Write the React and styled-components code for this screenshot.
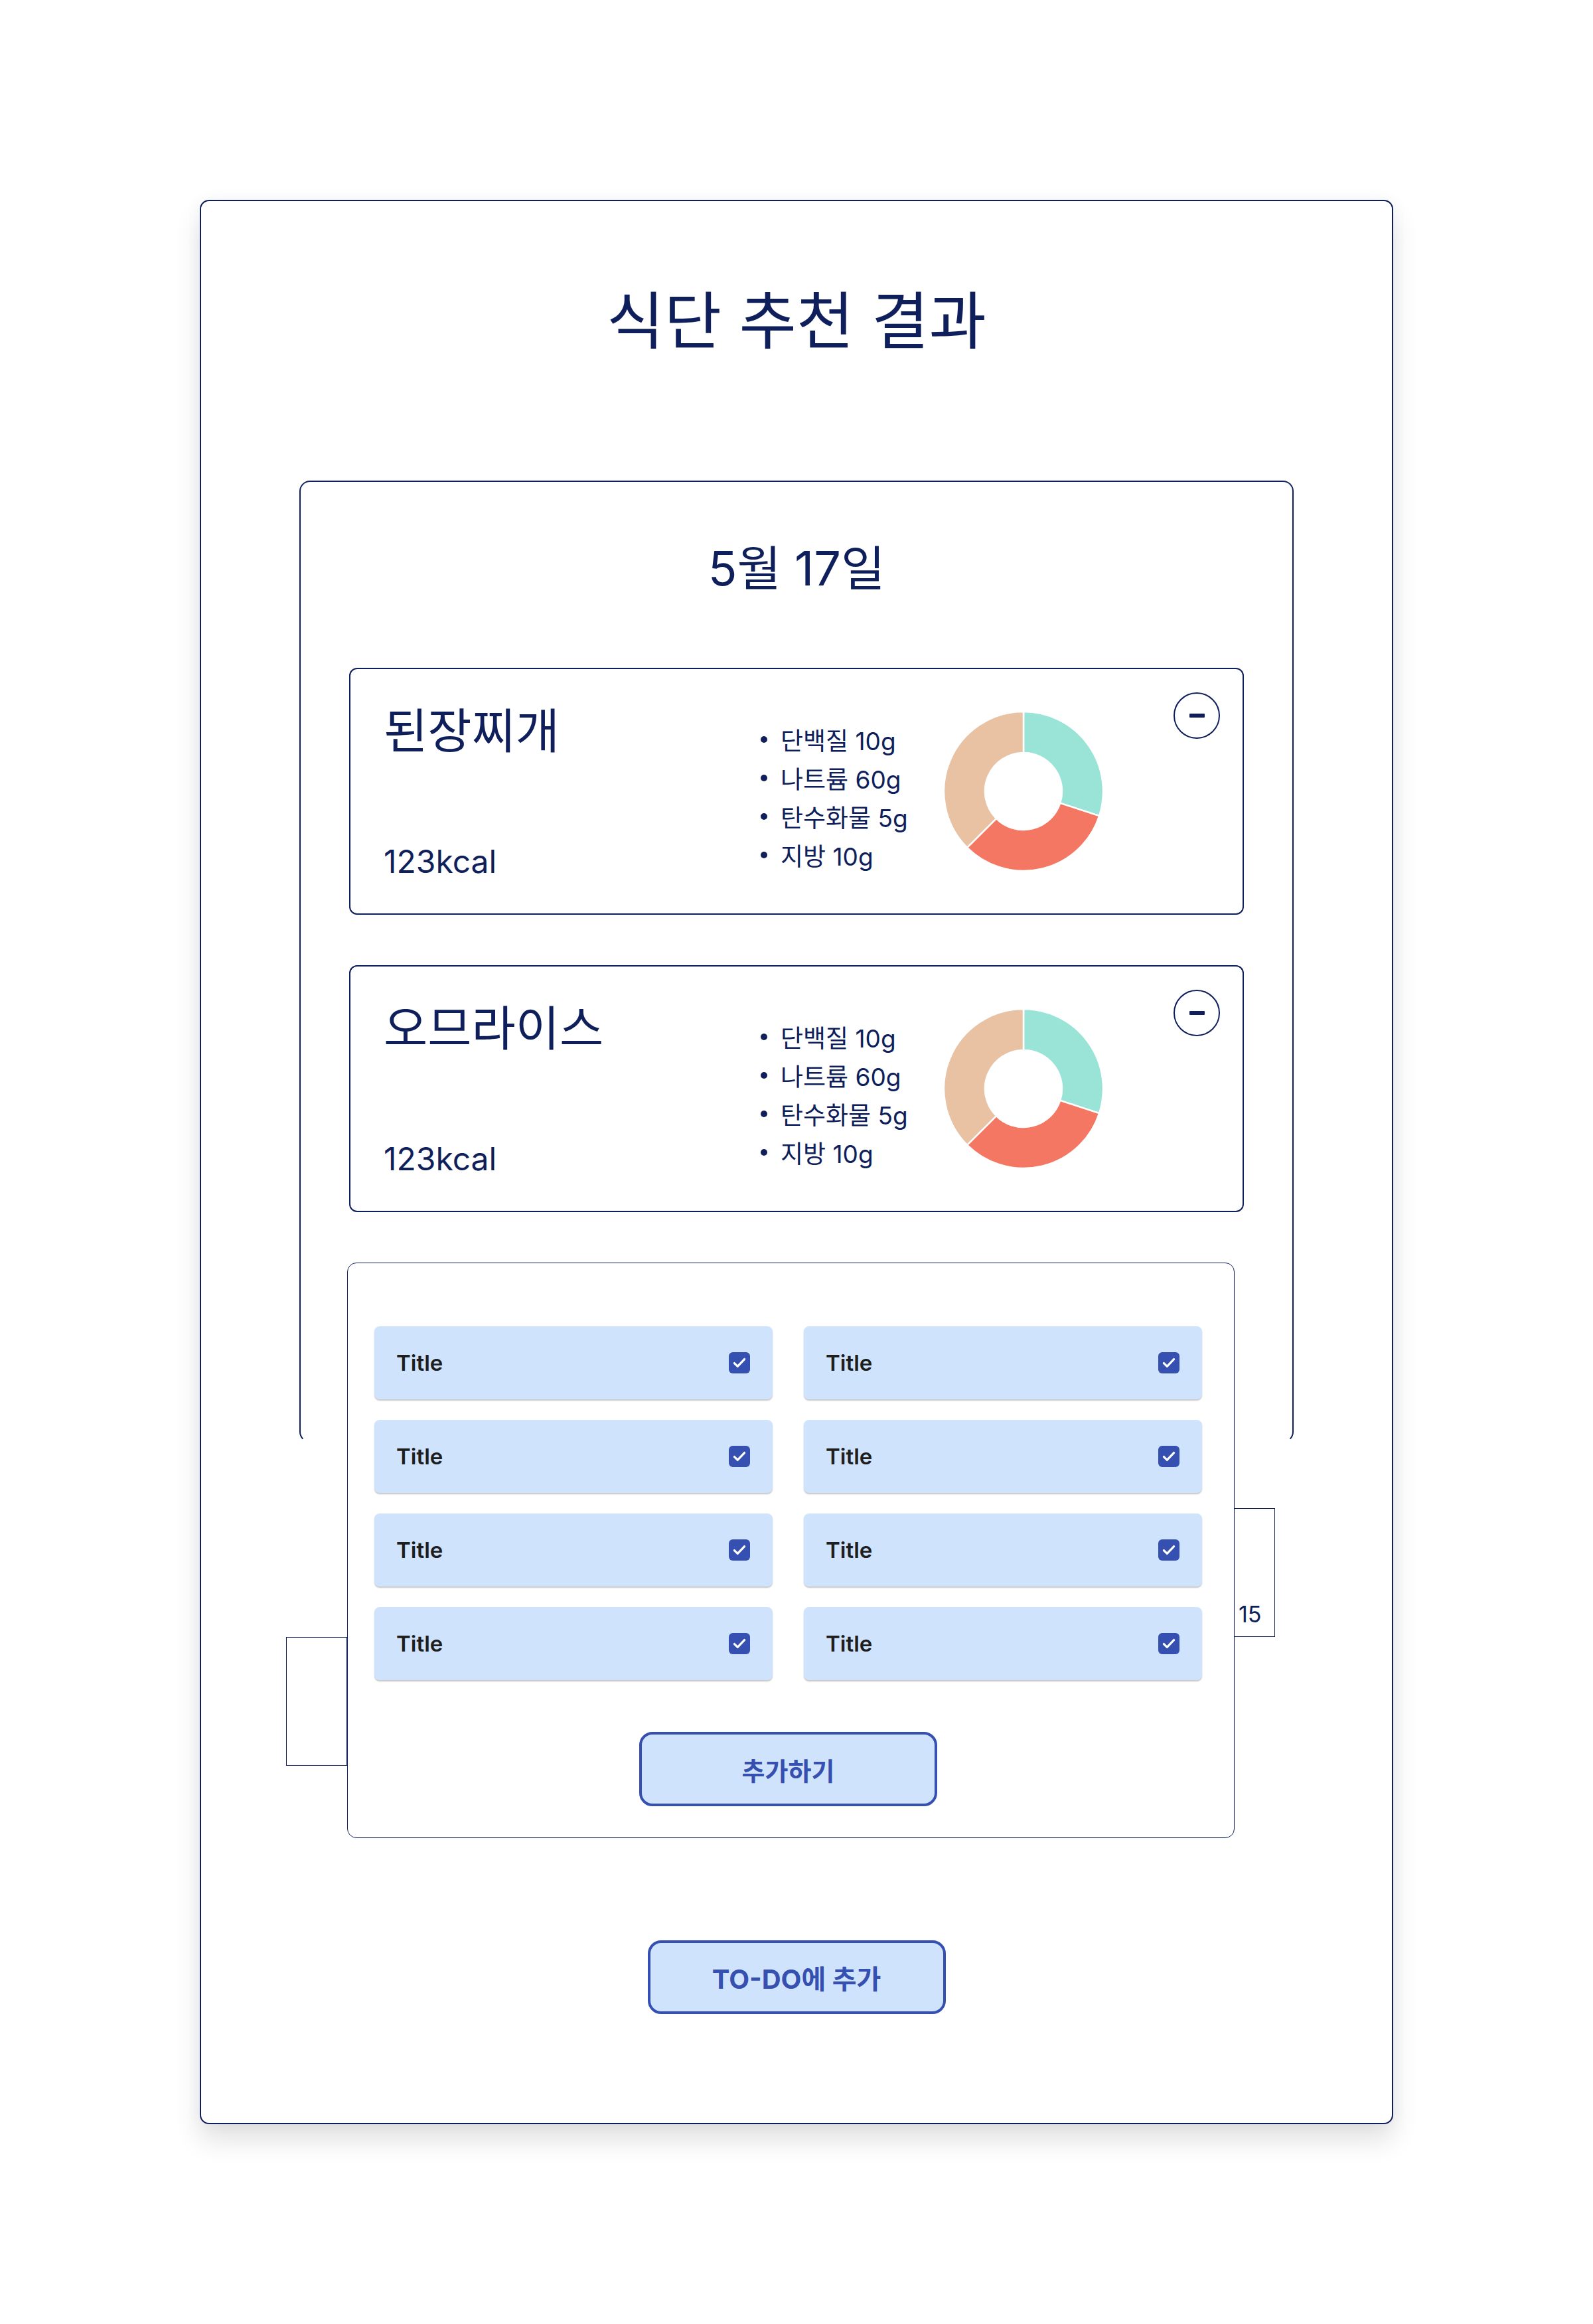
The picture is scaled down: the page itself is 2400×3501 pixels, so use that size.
import styled, { createGlobalStyle } from 'styled-components';

const NAVY = '#0f1f5c';
const BLUE = '#3550b0';
const LIGHT = '#d0e3fd';

const GlobalStyle = createGlobalStyle`
  * { box-sizing: border-box; }
  html, body {
    margin: 0;
    padding: 0;
    background: #ffffff;
    font-family: "Inter", "Noto Sans CJK KR", sans-serif;
    color: ${NAVY};
  }
`;

const Page = styled.div`
  width: 2400px;
  min-height: 3501px;
  padding-top: 301px;
`;

const OuterCard = styled.div`
  width: 1798px;
  margin: 0 auto;
  padding: 125px 0 164px;
  border: 2px solid ${NAVY};
  border-radius: 14px;
  background: #fff;
  box-shadow: 0 24px 40px rgba(0, 0, 0, 0.12), 0 0 24px rgba(0, 0, 0, 0.04);
  display: flex;
  flex-direction: column;
`;

const Title = styled.h1`
  margin: 0;
  font-size: 94px;
  line-height: 113px;
  font-weight: 400;
  text-align: center;
  color: ${NAVY};
`;

const DayCard = styled.section`
  width: 1498px;
  height: 1449px;
  margin: 183px auto 0;
  padding-top: 87px;
  border: 2px solid ${NAVY};
  border-bottom-color: transparent;
  border-radius: 16px;
  display: flex;
  flex-direction: column;
  flex-shrink: 0;
`;

const DateLabel = styled.h2`
  margin: 0 0 107px;
  font-size: 72px;
  line-height: 86px;
  font-weight: 400;
  text-align: center;
  color: ${NAVY};
`;

const MealCard = styled.div`
  width: 1348px;
  height: 372px;
  margin: 0 auto 76px;
  border: 2px solid ${NAVY};
  border-radius: 12px;
  display: flex;
  align-items: stretch;
  flex-shrink: 0;
`;

const MealInfo = styled.div`
  flex: 0 0 618px;
  padding: 50px 0 49px 50px;
  display: flex;
  flex-direction: column;
  justify-content: space-between;
`;

const MealName = styled.div`
  font-size: 72px;
  line-height: 86px;
  color: ${NAVY};
`;

const Kcal = styled.div`
  font-size: 48px;
  line-height: 58px;
  color: ${NAVY};
`;

const Nutrients = styled.ul`
  flex: 0 0 276px;
  align-self: center;
  margin: 18px 0 0;
  padding: 0;
  list-style: none;
`;

const Nutrient = styled.li`
  display: flex;
  align-items: center;
  gap: 20px;
  height: 58px;
  font-size: 37px;
  white-space: nowrap;
  color: ${NAVY};

  &::before {
    content: '';
    width: 10px;
    height: 10px;
    border-radius: 50%;
    background: ${NAVY};
    flex: 0 0 10px;
  }
`;

const DonutWrap = styled.div`
  flex: 0 0 240px;
  align-self: center;
  display: flex;
`;

const MinusButton = styled.button`
  align-self: flex-start;
  margin: 35px 34px 0 auto;
  width: 70px;
  height: 70px;
  padding: 0;
  border: 2px solid ${NAVY};
  border-radius: 50%;
  background: #fff;
  display: flex;
  align-items: center;
  justify-content: center;

  &::after {
    content: '';
    width: 23px;
    height: 6px;
    border-radius: 1px;
    background: ${NAVY};
  }
`;

const TodoCard = styled.div`
  position: relative;
  z-index: 2;
  width: 1337px;
  margin-left: 70px;
  padding: 95px 48px 47px 40px;
  border: 1px solid ${NAVY};
  border-radius: 14px;
  background: #fff;
  display: flex;
  flex-direction: column;
  align-items: center;
  flex-shrink: 0;
`;

const TodoGrid = styled.div`
  display: grid;
  grid-template-columns: 600px 600px;
  grid-auto-rows: 110px;
  column-gap: 47px;
  row-gap: 31px;
  align-self: stretch;
`;

const TodoItem = styled.div`
  display: flex;
  align-items: center;
  justify-content: space-between;
  padding: 0 34px 0 33px;
  background: ${LIGHT};
  border-radius: 8px;
  box-shadow: 0 2px 2px rgba(0, 0, 0, 0.22);
  font-size: 33px;
  font-weight: 600;
  color: #1e1e1e;
`;

const Check = styled.span`
  width: 32px;
  height: 32px;
  border-radius: 6px;
  background: ${BLUE};
  display: flex;
  align-items: center;
  justify-content: center;
`;

const OutlineButton = styled.button`
  width: 449px;
  height: ${(p) => p.$h || 112}px;
  margin-top: ${(p) => p.$top || 0}px;
  border: 4px solid ${BLUE};
  border-radius: 20px;
  background: ${LIGHT};
  color: ${BLUE};
  font-family: "Inter", "Noto Sans CJK KR", sans-serif;
  font-size: ${(p) => p.$size || 38}px;
  font-weight: 700;
  cursor: pointer;
  align-self: center;
  flex-shrink: 0;
`;

const CalendarStrip = styled.div`
  width: 1490px;
  margin: 99px 0 0 128px;
  display: grid;
  grid-template-columns: 92px 1fr 62px;
  grid-template-rows: 194px 194px;
  flex-shrink: 0;
`;

const DayCell = styled.div`
  grid-column: ${(p) => p.$col};
  grid-row: ${(p) => p.$row};
  border: 1px solid ${NAVY};
  display: flex;
  align-items: flex-end;
  padding: 0 0 16px 6px;
  font-size: 34px;
  line-height: 34px;
  color: ${NAVY};
`;

function polar(r, deg) {
  const a = (deg * Math.PI) / 180;
  return [120 + r * Math.sin(a), 120 - r * Math.cos(a)];
}

function slice(from, to, ro = 120, ri = 58) {
  const [x1, y1] = polar(ro, from);
  const [x2, y2] = polar(ro, to);
  const [x3, y3] = polar(ri, to);
  const [x4, y4] = polar(ri, from);
  const large = to - from > 180 ? 1 : 0;
  return `M${x1} ${y1} A${ro} ${ro} 0 ${large} 1 ${x2} ${y2} L${x3} ${y3} A${ri} ${ri} 0 ${large} 0 ${x4} ${y4} Z`;
}

function Donut() {
  return (
    <svg width="240" height="240" viewBox="0 0 240 240">
      <path d={slice(0, 108)} fill="#9ae4d7" stroke="#fff" strokeWidth="2.5" />
      <path d={slice(108, 225)} fill="#f37762" stroke="#fff" strokeWidth="2.5" />
      <path d={slice(225, 360)} fill="#e8c2a2" stroke="#fff" strokeWidth="2.5" />
    </svg>
  );
}

const nutrients = ['단백질 10g', '나트륨 60g', '탄수화물 5g', '지방 10g'];
const meals = ['된장찌개', '오므라이스'];

export default function App() {
  return (
    <Page>
      <GlobalStyle />
      <OuterCard>
        <Title>식단 추천 결과</Title>

        <DayCard>
          <DateLabel>5월 17일</DateLabel>
          {meals.map((name) => (
            <MealCard key={name}>
              <MealInfo>
                <MealName>{name}</MealName>
                <Kcal>123kcal</Kcal>
              </MealInfo>
              <Nutrients>
                {nutrients.map((n) => (
                  <Nutrient key={n}>{n}</Nutrient>
                ))}
              </Nutrients>
              <DonutWrap>
                <Donut />
              </DonutWrap>
              <MinusButton aria-label="삭제" />
            </MealCard>
          ))}

          <TodoCard>
            <TodoGrid>
              {Array.from({ length: 8 }).map((_, i) => (
                <TodoItem key={i}>
                  Title
                  <Check>
                    <svg width="26" height="26" viewBox="0 0 24 24" fill="none">
                      <path d="M5 12.5l4.5 4.5L19 7" stroke="#fff" strokeWidth="3" strokeLinecap="round" strokeLinejoin="round" />
                    </svg>
                  </Check>
                </TodoItem>
              ))}
            </TodoGrid>
            <OutlineButton $top={78}>추가하기</OutlineButton>
          </TodoCard>
        </DayCard>

        <CalendarStrip>
          <DayCell $col={3} $row={1}>15</DayCell>
          <DayCell $col={1} $row={2} />
        </CalendarStrip>

        <OutlineButton $top={263} $h={111} $size={40}>TO-DO에 추가</OutlineButton>
      </OuterCard>
    </Page>
  );
}
